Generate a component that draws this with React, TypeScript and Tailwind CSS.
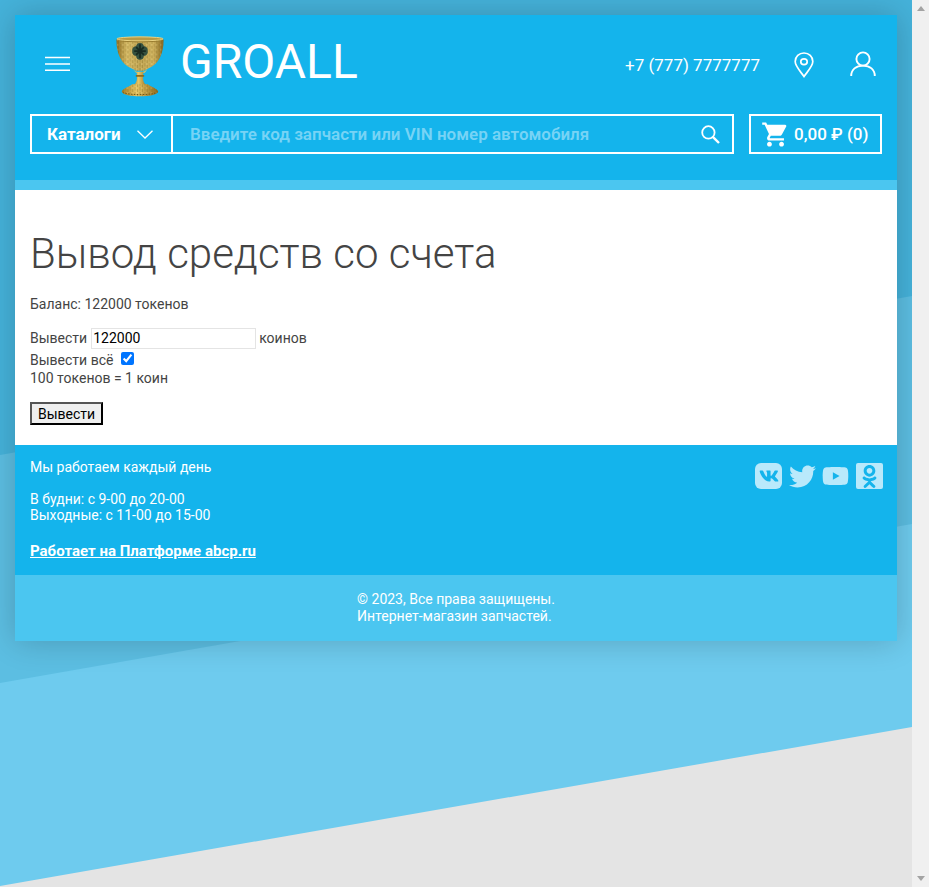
import React from "react";
import { MdShoppingCart } from "react-icons/md";
import { FaVk, FaTwitter, FaYoutube, FaOdnoklassniki } from "react-icons/fa";

function Goblet() {
  return (
    <svg width="50" height="63" viewBox="0 0 52 65" className="shrink-0">
      <defs>
        <linearGradient id="g1" x1="0" x2="1" y1="0" y2="0">
          <stop offset="0" stopColor="#8f6f22" />
          <stop offset="0.22" stopColor="#d8bd68" />
          <stop offset="0.5" stopColor="#c2a755" />
          <stop offset="0.78" stopColor="#d2b560" />
          <stop offset="1" stopColor="#866720" />
        </linearGradient>
        <linearGradient id="g2" x1="0" x2="1" y1="0" y2="0">
          <stop offset="0" stopColor="#a87d22" />
          <stop offset="0.4" stopColor="#e6c666" />
          <stop offset="1" stopColor="#8f6a1c" />
        </linearGradient>
        <pattern id="tex" width="5" height="5" patternUnits="userSpaceOnUse">
          <path d="M1 0 V3.5 M3.5 2 V5" stroke="#6b5518" strokeWidth="0.8" opacity="0.4" />
          <rect x="2" y="0.5" width="1" height="1" fill="#f3e6ad" opacity="0.45" />
        </pattern>
      </defs>
      <path d="M1.5 6 C1.5 20 6 31 18 36 L22 38 L30 38 L34 36 C46 31 50.5 20 50.5 6 Z" fill="url(#g1)" />
      <path d="M1.5 6 C1.5 20 6 31 18 36 L22 38 L30 38 L34 36 C46 31 50.5 20 50.5 6 Z" fill="url(#tex)" />
      <ellipse cx="26" cy="5.5" rx="24.5" ry="2.8" fill="#8f7226" />
      <ellipse cx="26" cy="4.8" rx="24" ry="2.1" fill="#b89a45" stroke="#ecd686" strokeWidth="1" />
      <path d="M26 9 C29 9 30 11 30 12.5 C33 12.5 34.5 15 34 17.5 C34.5 20 33 22.5 30 22.5 C30 24.5 28.5 26.5 26 26.5 C23.5 26.5 22 24.5 22 22.5 C19 22.5 17.5 20 18 17.5 C17.5 15 19 12.5 22 12.5 C22 11 23 9 26 9 Z" fill="#34513f" />
      <path d="M26 10.5 L26 25 M20 17.5 L32 17.5 M22 13.5 L30 21.5 M30 13.5 L22 21.5" stroke="#172a22" strokeWidth="1.8" />
      <path d="M18 36 C22 41 30 41 34 36 L31 40 L22 40 Z" fill="#e4c25c" />
      <path d="M22.5 39 L29.5 39 L29 44 C29 50 31 52 34 54 L18 54 C21 52 23 50 23 44 Z" fill="url(#g2)" />
      <rect x="21.5" y="42.5" width="9" height="1.6" rx="0.8" fill="#8a6a1e" />
      <path d="M18 52 C14 55 8 56.5 7 59.5 C8 63 17 64.5 26 64.5 C35 64.5 44 63 45 59.5 C44 56.5 38 55 34 52 Z" fill="url(#g2)" />
      <path d="M18 52 C14 55 8 56.5 7 59.5 C8 63 17 64.5 26 64.5 C35 64.5 44 63 45 59.5 C44 56.5 38 55 34 52 Z" fill="url(#tex)" />
      <path d="M8 60.5 C14 63.5 38 63.5 44 60.5" stroke="#6f5315" strokeWidth="1" strokeDasharray="1.5 1.5" fill="none" />
    </svg>
  );
}

function Hamburger() {
  return (
    <svg width="25" height="16" viewBox="0 0 25 16" className="shrink-0">
      <path d="M0 1.5H25M0 7.9H25M0 14.3H25" stroke="#fff" strokeWidth="1.5" />
    </svg>
  );
}

function Pin() {
  return (
    <svg width="20" height="26" viewBox="0 0 20 26" fill="none" stroke="#fff" strokeWidth="1.7">
      <path d="M10 24.5 C7 20 1.2 14.5 1.2 9.6 C1.2 4.7 5.1 1 10 1 C14.9 1 18.8 4.7 18.8 9.6 C18.8 14.5 13 20 10 24.5 Z" />
      <ellipse cx="10" cy="9.8" rx="3.2" ry="2.9" />
    </svg>
  );
}

function User() {
  return (
    <svg width="26" height="26" viewBox="0 0 26 26" fill="none" stroke="#fff" strokeWidth="1.9">
      <circle cx="13" cy="8" r="6.6" />
      <path d="M1.2 25 C1.2 18.5 6 14.6 13 14.6 C20 14.6 24.8 18.5 24.8 25" />
    </svg>
  );
}

function Search() {
  return (
    <svg width="19" height="19" viewBox="0 0 19 19" fill="none" stroke="#fff" className="shrink-0">
      <circle cx="7.4" cy="7.4" r="6.2" strokeWidth="1.8" />
      <path d="M11.8 11.8 L18 18" strokeWidth="2.4" />
    </svg>
  );
}

function Tile({ children }: { children: React.ReactNode }) {
  return <span className="flex h-[26px] w-[27px] items-center justify-center">{children}</span>;
}

export default function App() {
  return (
    <div className="flex h-[887px] w-full overflow-hidden font-['Roboto',sans-serif] text-sm text-[#444]">
      <div className="relative h-full w-[912px] shrink-0 overflow-hidden">
        <svg className="absolute inset-0" width="912" height="887" viewBox="0 0 912 887">
          <rect width="912" height="887" fill="#e4e4e4" />
          <polygon points="0,0 912,0 912,727 0,886" fill="#6ecbee" />
          <polygon points="0,0 912,0 912,524 0,683" fill="#5cbee2" />
          <polygon points="0,0 912,0 912,296 0,455" fill="#45b2da" />
        </svg>

        <div className="relative mx-[15px] mt-[15px] w-[882px] shadow-[0_0_30px_rgba(0,0,0,0.2)]">
          <header className="h-[165px] bg-[#14b4ec] px-[15px] text-white">
            <div className="flex h-[99px] items-center">
              <div className="ml-[15px] mt-[-2px]"><Hamburger /></div>
              <div className="ml-[45px] mt-[2px]"><Goblet /></div>
              <span className="ml-[15px] mt-[-5px] text-[48px] font-normal leading-none">GROALL</span>
              <span className="ml-auto mt-[1px] text-[17px] leading-none">+7 (777) 7777777</span>
              <span className="ml-[34px] mt-[1px] flex"><Pin /></span>
              <span className="ml-[36px] mr-[6px] mt-[-2px] flex"><User /></span>
            </div>
            <div className="flex items-stretch">
              <div className="flex h-10 flex-1 border-2 border-white">
                <button className="flex w-[141px] items-center border-r-2 border-white pl-[15px] text-[17px] font-bold">
                  Каталоги
                  <svg width="16" height="9" viewBox="0 0 16 9" fill="none" stroke="#fff" strokeWidth="1.3" className="ml-[16px]">
                    <path d="M0.5 0.7 L8 8 L15.5 0.7" />
                  </svg>
                </button>
                <div className="flex flex-1 items-center pl-[17px] pr-[12px]">
                  <input
                    className="min-w-0 flex-1 bg-transparent text-[17px] font-semibold outline-none placeholder:text-[#77d3f5]"
                    placeholder="Введите код запчасти или VIN номер автомобиля"
                  />
                  <Search />
                </div>
              </div>
              <div className="ml-[15px] flex h-10 w-[133px] items-center border-2 border-white pl-[10px] text-[17px] font-medium">
                <MdShoppingCart size={29} className="shrink-0" />
                <span className="ml-[4px]">0,00 ₽ (0)</span>
              </div>
            </div>
          </header>
          <div className="h-[10px] bg-[#4bc6f0]" />

          <main className="h-[255px] bg-white px-[15px] pt-[39px]">
            <h1 className="text-[42px] font-light leading-[50px]">Вывод средств со счета</h1>
            <p className="mt-[17px] leading-4">Баланс: 122000 токенов</p>
            <div className="mt-[16px] flex h-[21px] items-center">
              <span className="mb-[2px]">Вывести</span>
              <input
                defaultValue="122000"
                className="ml-1 h-[21px] w-[165px] border border-[#e4e4e4] pb-[2px] pl-px text-black outline-none"
              />
              <span className="mb-[2px] ml-[3px]">коинов</span>
            </div>
            <div className="mt-[1px] flex h-[19px] items-center">
              Вывести всё
              <input type="checkbox" defaultChecked className="mb-[3px] ml-[8px]" />
            </div>
            <p className="leading-[19px]">100 токенов = 1 коин</p>
            <button className="mt-[14px] block h-[23px] w-[73px] border-2 border-black border-l-[#555] border-t-[#555] bg-[#efefef] pb-[2px] text-black">
              Вывести
            </button>
          </main>

          <footer className="flex h-[130px] items-start justify-between bg-[#14b4ec] pl-[15px] pr-[14px] pt-[14px] text-white">
            <div className="leading-4">
              <p>Мы работаем каждый день</p>
              <p className="mt-4">В будни: с 9-00 до 20-00</p>
              <p>Выходные: с 11-00 до 15-00</p>
              <a className="mt-5 block text-[15px] font-bold underline">Работает на Платформе abcp.ru</a>
            </div>
            <div className="mt-[4px] flex gap-[6.6px] text-[#b9e9fb]">
              <Tile>
                <span className="flex h-[26px] w-[27px] items-center justify-center rounded-[6px] bg-[#b9e9fb] text-[#14b4ec]">
                  <FaVk size={20} />
                </span>
              </Tile>
              <Tile><FaTwitter size={27} /></Tile>
              <Tile><FaYoutube size={28} /></Tile>
              <Tile>
                <span className="flex h-[26px] w-[27px] items-center justify-center rounded-[2px] bg-[#b9e9fb] text-[#14b4ec]">
                  <FaOdnoklassniki size={23} />
                </span>
              </Tile>
            </div>
          </footer>

          <div className="flex h-[66px] justify-center bg-[#4bc6f0] pt-[16px] text-white">
            <div className="leading-[17px]">
              <p>© 2023, Все права защищены.</p>
              <p>Интернет-магазин запчастей.</p>
            </div>
          </div>
        </div>
      </div>

      <div className="flex h-full w-[17px] shrink-0 flex-col items-center justify-between bg-[#f0f0f0] py-[6px]">
        <span className="h-0 w-0 border-x-[4px] border-b-[5px] border-x-transparent border-b-[#a3a3a3]" />
        <span className="h-0 w-0 border-x-[4px] border-t-[5px] border-x-transparent border-t-[#a3a3a3]" />
      </div>
    </div>
  );
}
